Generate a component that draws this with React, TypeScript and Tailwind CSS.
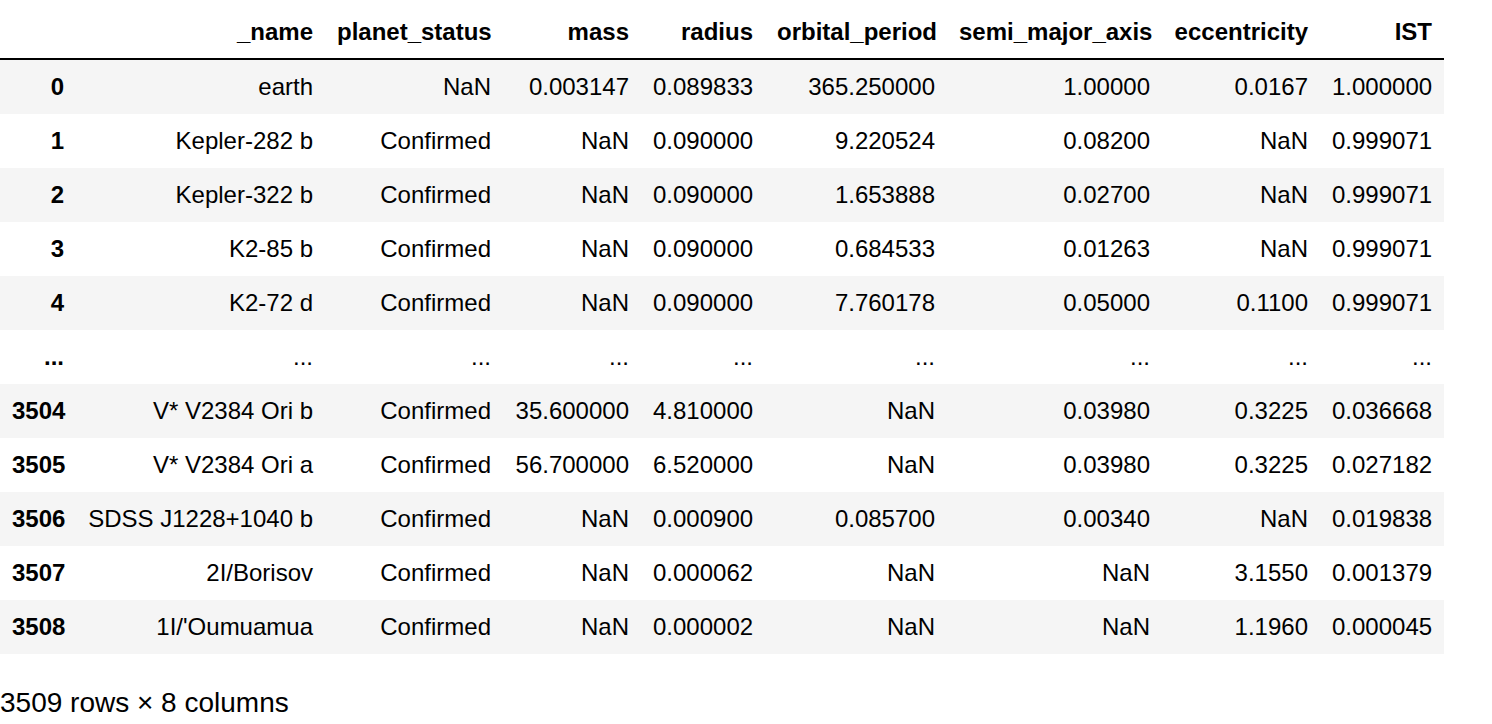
const columns = [
  { key: "_name", width: "w-[249px]" },
  { key: "planet_status", width: "w-[178px]" },
  { key: "mass", width: "w-[138px]" },
  { key: "radius", width: "w-[124px]" },
  { key: "orbital_period", width: "w-[182px]" },
  { key: "semi_major_axis", width: "w-[215px]" },
  { key: "eccentricity", width: "w-[158px]" },
  { key: "IST", width: "w-[124px]" },
];

const rows: string[][] = [
  ["0", "earth", "NaN", "0.003147", "0.089833", "365.250000", "1.00000", "0.0167", "1.000000"],
  ["1", "Kepler-282 b", "Confirmed", "NaN", "0.090000", "9.220524", "0.08200", "NaN", "0.999071"],
  ["2", "Kepler-322 b", "Confirmed", "NaN", "0.090000", "1.653888", "0.02700", "NaN", "0.999071"],
  ["3", "K2-85 b", "Confirmed", "NaN", "0.090000", "0.684533", "0.01263", "NaN", "0.999071"],
  ["4", "K2-72 d", "Confirmed", "NaN", "0.090000", "7.760178", "0.05000", "0.1100", "0.999071"],
  ["...", "...", "...", "...", "...", "...", "...", "...", "..."],
  ["3504", "V* V2384 Ori b", "Confirmed", "35.600000", "4.810000", "NaN", "0.03980", "0.3225", "0.036668"],
  ["3505", "V* V2384 Ori a", "Confirmed", "56.700000", "6.520000", "NaN", "0.03980", "0.3225", "0.027182"],
  ["3506", "SDSS J1228+1040 b", "Confirmed", "NaN", "0.000900", "0.085700", "0.00340", "NaN", "0.019838"],
  ["3507", "2I/Borisov", "Confirmed", "NaN", "0.000062", "NaN", "NaN", "3.1550", "0.001379"],
  ["3508", "1I/'Oumuamua", "Confirmed", "NaN", "0.000002", "NaN", "NaN", "1.1960", "0.000045"],
];

export default function App() {
  return (
    <div className="min-h-screen bg-white text-black font-['Liberation_Sans',Arial,sans-serif]">
      <table className="table-fixed w-[1444px] border-separate border-spacing-0 text-[24px]">
        <colgroup>
          <col className="w-[76px]" />
          {columns.map((c) => (
            <col key={c.key} className={c.width} />
          ))}
        </colgroup>
        <thead>
          <tr>
            <th className="border-b-2 border-black pt-[18px] pb-[12px] px-[12px] leading-[28px]"></th>
            {columns.map((c) => (
              <th
                key={c.key}
                className="border-b-2 border-black pt-[18px] pb-[12px] px-[12px] leading-[28px] text-right font-bold whitespace-nowrap"
              >
                {c.key}
              </th>
            ))}
          </tr>
        </thead>
        <tbody>
          {rows.map((row, i) => (
            <tr key={i} className={i % 2 === 0 ? "bg-[#f5f5f5]" : "bg-white"}>
              {/* index column is a bold th, like pandas */}
              <th className="py-[13px] px-[12px] leading-[28px] text-right font-bold">{row[0]}</th>
              {row.slice(1).map((v, j) => (
                <td key={j} className="py-[13px] px-[12px] leading-[28px] text-right whitespace-nowrap">
                  {v}
                </td>
              ))}
            </tr>
          ))}
        </tbody>
      </table>
      <p className="mt-[33px] text-[28px] leading-[32px]">3509 rows × 8 columns</p>
    </div>
  );
}
